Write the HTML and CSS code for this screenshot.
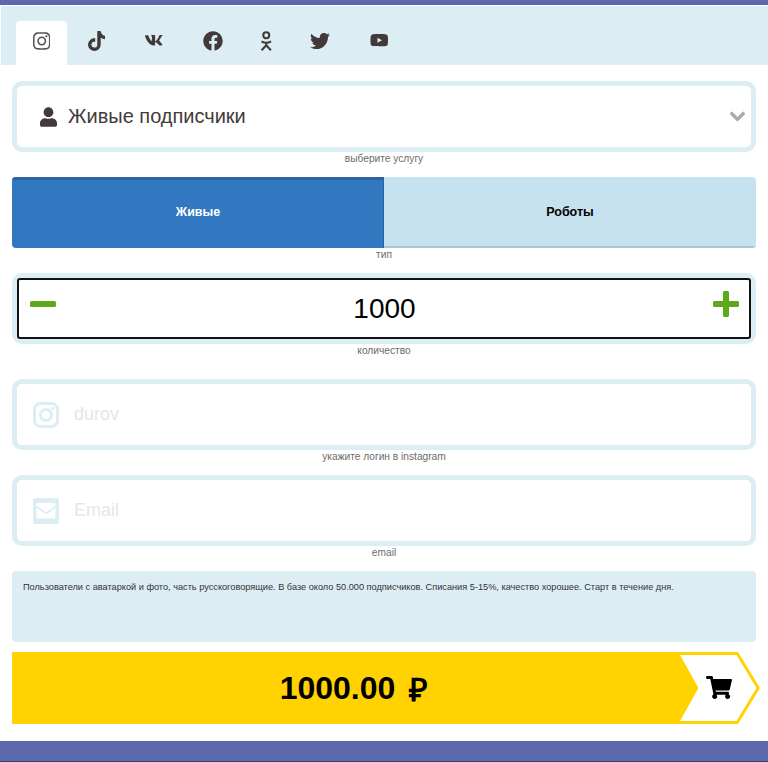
FILE: index.html
```html
<!DOCTYPE html>
<html lang="ru">
<head>
<meta charset="utf-8">
<title>Заказ</title>
<link rel="stylesheet" href="styles.css">
</head>
<body>
<header class="topbar"></header>
<nav class="tabs">
  <a class="tab tab-active"><svg class="ico ico-grey" viewBox="0 0 448 512"><path d="M224.1 141c-63.6 0-114.9 51.3-114.9 114.9s51.3 114.9 114.9 114.9S339 319.5 339 255.9 287.7 141 224.1 141zm0 189.6c-41.1 0-74.7-33.5-74.7-74.7s33.5-74.7 74.7-74.7 74.7 33.5 74.7 74.7-33.6 74.7-74.7 74.7zm146.4-194.3c0 14.9-12 26.8-26.8 26.8-14.9 0-26.8-12-26.8-26.8s12-26.8 26.8-26.8 26.8 12 26.8 26.8zm76.1 27.2c-1.7-35.9-9.9-67.7-36.2-93.9-26.2-26.2-58-34.4-93.9-36.2-37-2.1-147.9-2.1-184.9 0-35.8 1.7-67.6 9.9-93.9 36.1s-34.4 58-36.2 93.9c-2.1 37-2.1 147.9 0 184.9 1.7 35.9 9.9 67.7 36.2 93.9s58 34.4 93.9 36.2c37 2.1 147.9 2.1 184.9 0 35.9-1.7 67.7-9.9 93.9-36.2 26.2-26.2 34.4-58 36.2-93.9 2.1-37 2.1-147.8 0-184.8zM398.8 388c-7.8 19.6-22.9 34.7-42.6 42.6-29.5 11.7-99.5 9-132.1 9s-102.7 2.6-132.1-9c-19.6-7.8-34.7-22.9-42.6-42.6-11.7-29.5-9-99.5-9-132.1s-2.6-102.7 9-132.1c7.8-19.6 22.9-34.7 42.6-42.6 29.5-11.7 99.5-9 132.1-9s102.7-2.6 132.1 9c19.6 7.8 34.7 22.9 42.6 42.6 11.7 29.5 9 99.5 9 132.1s2.7 102.7-9 132.1z"/></svg></a>
  <a class="tab"><svg class="ico" viewBox="0 0 448 512"><path d="M448,209.91a210.06,210.06,0,0,1-122.77-39.25V349.38A162.55,162.55,0,1,1,185,188.31V278.2a74.62,74.62,0,1,0,52.23,71.18V0l88,0a121.18,121.18,0,0,0,1.86,22.17h0A122.18,122.18,0,0,0,381,102.39a121.43,121.43,0,0,0,67,20.14Z"/></svg></a>
  <a class="tab"><svg class="ico ico-wide" viewBox="0 0 576 512"><path d="M545 117.7c3.7-12.5 0-21.7-17.8-21.7h-58.9c-15 0-21.9 7.9-25.6 16.7-5.1 12.5-43.5 103-88.3 153.7-14.5 14.6-21 19.3-28.9 19.3-3.9 0-9.2-4.7-9.2-17.2V117.7c0-15-4.4-21.7-16.8-21.7h-92.6c-9.4 0-15 7-15 13.5 0 14.2 21.2 17.5 23.4 57.6v87.1c0 19.1-3.4 22.6-10.9 22.6-20 0-68.6-73.4-97.4-157.4-5.8-16.3-11.5-22.9-26.6-22.9H21.7C5 96.5 0 104.4 0 113.2c0 15.6 20 93.1 93.1 195.5C141.8 378.7 210.4 416 272.8 416c37.5 0 42.1-8.4 42.1-22.9 0-66.8-3.4-73.1 15.4-73.1 8.7 0 23.7 4.4 58.7 38.1 40 40 46.6 57.9 69 57.9h58.9c16.8 0 25.3-8.4 20.4-25-11.2-34.9-86.9-106.7-90.3-111.5-8.7-11.2-6.2-16.2 0-26.2.1-.1 72-101.3 79.4-135.6z"/></svg></a>
  <a class="tab"><svg class="ico ico-square" viewBox="0 0 512 512"><path d="M504 256C504 119 393 8 256 8S8 119 8 256c0 123.78 90.69 226.38 209.25 245V327.69h-63V256h63v-54.64c0-62.15 37-96.48 93.67-96.48 27.14 0 55.52 4.84 55.52 4.84v61h-31.28c-30.8 0-40.41 19.12-40.41 38.73V256h68.78l-11 71.69h-57.78V501C413.31 482.38 504 379.78 504 256z"/></svg></a>
  <a class="tab"><svg class="ico ico-ok" viewBox="0 0 12.500 20"><circle cx="6.250" cy="4.300" r="3"/><path d="M1.500 10.300c3 1.900 6.500 1.900 9.500 0M6.250 12.300v1.500M1.600 19.200l4.650-5 4.650 5"/></svg></a>
  <a class="tab"><svg class="ico ico-square" viewBox="0 0 512 512"><path d="M459.37 151.716c.325 4.548.325 9.097.325 13.645 0 138.72-105.583 298.558-298.558 298.558-59.452 0-114.68-17.219-161.137-47.106 8.447.974 16.568 1.299 25.34 1.299 49.055 0 94.213-16.568 130.274-44.832-46.132-.975-84.792-31.188-98.112-72.772 6.498.974 12.995 1.624 19.818 1.624 9.421 0 18.843-1.3 27.614-3.573-48.081-9.747-84.143-51.98-84.143-102.985v-1.299c13.969 7.797 30.214 12.67 47.431 13.319-28.264-18.843-46.781-51.005-46.781-87.391 0-19.492 5.197-37.36 14.294-52.954 51.655 63.675 129.3 105.258 216.365 109.807-1.624-7.797-2.599-15.918-2.599-24.04 0-57.828 46.782-104.934 104.934-104.934 30.213 0 57.502 12.67 76.67 33.137 23.715-4.548 46.456-13.32 66.599-25.34-7.798 24.366-24.366 44.833-46.132 57.827 21.117-2.273 41.584-8.122 60.426-16.243-14.292 20.791-32.161 39.308-52.628 54.253z"/></svg></a>
  <a class="tab"><svg class="ico ico-wide" viewBox="0 0 576 512"><path d="M549.655 124.083c-6.281-23.65-24.787-42.276-48.284-48.597C458.781 64 288 64 288 64S117.22 64 74.629 75.486c-23.497 6.322-42.003 24.947-48.284 48.597-11.412 42.867-11.412 132.305-11.412 132.305s0 89.438 11.412 132.305c6.281 23.65 24.787 41.5 48.284 47.821C117.22 448 288 448 288 448s170.78 0 213.371-11.486c23.497-6.321 42.003-24.171 48.284-47.821 11.412-42.867 11.412-132.305 11.412-132.305s0-89.438-11.412-132.305zm-317.51 213.508V175.185l142.739 81.205-142.739 81.201z"/></svg></a>
</nav>
<main class="form">
  <section class="field">
    <div class="box box-select">
      <svg class="ico-user" viewBox="0 0 448 512"><path d="M224 256c70.7 0 128-57.3 128-128S294.7 0 224 0 96 57.3 96 128s57.3 128 128 128zm89.6 32h-16.7c-22.2 10.2-46.9 16-72.9 16s-50.6-5.8-72.9-16h-16.7C60.2 288 0 348.2 0 422.4V464c0 26.5 21.5 48 48 48h352c26.5 0 48-21.5 48-48v-41.6c0-74.2-60.2-134.4-134.4-134.4z"/></svg>
      <span class="select-text">Живые подписчики</span>
      <svg class="ico-chevron" viewBox="0 0 448 512"><path d="M207.029 381.476L12.686 187.132c-9.373-9.373-9.373-24.569 0-33.941l22.667-22.667c9.357-9.357 24.522-9.375 33.901-.04L224 284.505l154.745-154.021c9.379-9.335 24.544-9.317 33.901.04l22.667 22.667c9.373 9.373 9.373 24.569 0 33.941L240.971 381.476c-9.373 9.372-24.569 9.372-33.942 0z"/></svg>
    </div>
    <p class="caption">выберите услугу</p>
  </section>
  <section class="field">
    <div class="toggle">
      <div class="opt opt-on">Живые</div>
      <div class="opt opt-off">Роботы</div>
    </div>
    <p class="caption">тип</p>
  </section>
  <section class="field field-qty">
    <div class="box box-qty">
      <div class="qty-inner">
        <svg class="qty-btn" viewBox="0 0 26 26"><rect x="0" y="10" width="26" height="6" rx="1.500"/></svg>
        <span class="qty-val">1000</span>
        <svg class="qty-btn" viewBox="0 0 26 26"><path d="M10 1.500C10 .7 10.700 0 11.500 0h3c.8 0 1.500.7 1.500 1.500V10h8.500c.8 0 1.500.7 1.500 1.500v3c0 .8-.7 1.500-1.500 1.500H16v8.500c0 .8-.7 1.500-1.500 1.500h-3c-.8 0-1.500-.7-1.500-1.500V16H1.500C.7 16 0 15.300 0 14.500v-3C0 10.700.7 10 1.500 10H10z"/></svg>
      </div>
    </div>
    <p class="caption">количество</p>
  </section>
  <section class="field">
    <div class="box box-input">
      <svg class="ico-input" viewBox="0 0 26 26"><rect x="1.500" y="1.500" width="23" height="23" rx="6" class="ig-line"/><circle cx="13" cy="13" r="5.500" class="ig-line"/><circle cx="19.500" cy="6.500" r="1.500"/></svg>
      <input class="text-input" type="text" placeholder="durov">
    </div>
    <p class="caption">укажите логин в instagram</p>
  </section>
  <section class="field">
    <div class="box box-input">
      <svg class="ico-input" viewBox="0 0 26 26"><rect width="26" height="26" rx="2.500"/><rect class="env-body" x="3.500" y="5" width="19" height="15.500" rx="1.500"/><path class="env-line" d="M3.500 8.500l7.800 5.800q1.700 1.200 3.400 0l7.800-5.800"/></svg>
      <input class="text-input" type="text" placeholder="Email">
    </div>
    <p class="caption">email</p>
  </section>
  <section class="desc">Пользователи с аватаркой и фото, часть русскоговорящие. В базе около 50.000 подписчиков. Списания 5-15%, качество хорошее. Старт в течение дня.</section>
  <section class="buy">
    <div class="price">1000.00<span class="rub">₽</span></div>
    <div class="buy-arrow">
      <svg class="arrow-shape" viewBox="0 0 80 72"><path class="arrow-fill" d="M0 0H58L80 36 58 72H0Z"/><path class="arrow-white" d="M0 3H56.500L76.500 36 56.500 69H0L18.500 36Z"/></svg>
      <svg class="ico-cart" viewBox="0 0 576 512"><path d="M528.12 301.319l47.273-208C578.806 78.301 567.391 64 551.99 64H159.208l-9.166-44.81C147.758 8.021 137.93 0 126.529 0H24C10.745 0 0 10.745 0 24v16c0 13.255 10.745 24 24 24h69.883l70.248 343.435C147.325 417.1 136 435.222 136 456c0 30.928 25.072 56 56 56s56-25.072 56-56c0-15.674-6.447-29.835-16.824-40h209.647C430.447 426.165 424 440.326 424 456c0 30.928 25.072 56 56 56s56-25.072 56-56c0-22.172-12.888-41.332-31.579-50.405l5.517-24.276c3.413-15.018-8.002-29.319-23.403-29.319H218.117l-6.545-32h293.145c11.206 0 20.92-7.754 23.403-18.681z"/></svg>
    </div>
  </section>
</main>
<footer class="bottombar"></footer>
</body>
</html>
```
FILE: styles.css
```css
* { box-sizing: border-box; }
html, body { margin: 0; padding: 0; }
body {
  width: 768px;
  height: 762px;
  overflow: hidden;
  background: #fff;
  font-family: "Liberation Sans", Arial, sans-serif;
  color: #423a38;
}
.topbar { height: 5px; background: #5c69ad; }
.tabs {
  display: flex;
  gap: 4px;
  height: 59px;
  margin: 1px 0 0 1px;
  padding: 15px 0 0 15px;
  background: #dcedf4;
}
.tab {
  height: 44px;
  display: flex;
  align-items: center;
  justify-content: center;
  padding: 0 16.750px 4px;
  border-radius: 4px 4px 0 0;
}
.tab-active { background: #fff; }
.ico { height: 20px; width: 17.500px; fill: #423a38; }
.ico-wide { width: 18.500px; height: 16.500px; margin: 0 2px 1px; }
.ico-square { width: 20px; }
.ico-grey { fill: #555; }
.ico-ok { width: 12.500px; fill: none; stroke: #423a38; stroke-width: 2.100; }
.form { padding: 16px 12px 0; }
.field { margin-bottom: 12px; }
.field-qty { margin-bottom: 22px; }
.box {
  height: 71px;
  border: 5px solid #dcedf4;
  border-radius: 10px;
  background: #fff;
  display: flex;
  align-items: center;
}
.box-select { padding: 0 6px 0 23px; }
.ico-user { width: 17px; height: 20px; fill: #423a38; margin-right: 11px; }
.select-text { flex: 1; font-size: 20px; color: #423a38; }
.ico-chevron { width: 15px; height: 17px; fill: #aaa; stroke: #aaa; stroke-width: 30; }
.caption {
  margin: 1px 0 0;
  height: 12px;
  text-align: center;
  font-size: 10.200px;
  line-height: 12px;
  color: #6b6b6b;
}
.toggle {
  display: flex;
  height: 71px;
  border-radius: 4px;
  overflow: hidden;
}
.opt {
  flex: 1;
  display: flex;
  align-items: center;
  justify-content: center;
  padding-bottom: 1px;
  font-size: 12.500px;
  font-weight: 700;
}
.opt-on {
  background: #3178c0;
  color: #fff;
  box-shadow: inset 0 3px 0 #2b629f, inset -1px 0 0 #2b629f;
}
.opt-off {
  background: #c6e2ee;
  color: #000;
  box-shadow: inset 0 -2px 0 #a9c5d3;
}
.qty-inner {
  flex: 1;
  height: 61px;
  border: 2px solid #111;
  border-radius: 3px;
  display: flex;
  align-items: center;
  justify-content: space-between;
  padding: 0 10px 9px 11px;
}
.qty-btn { width: 26px; height: 26px; fill: #5fa81d; }
.qty-val { font-size: 28px; color: #000; padding-top: 9px; }
.box-input { padding: 0 16px; }
.ico-input { width: 26px; height: 26px; fill: #dcedf4; flex: none; margin-right: 15px; }
.ig-line { fill: none; stroke: #dcedf4; stroke-width: 3; }
.env-body { fill: #fff; }
.env-line { fill: none; stroke: #dcedf4; stroke-width: 1.800; }
.text-input {
  flex: 1;
  min-width: 0;
  border: 0;
  outline: 0;
  padding: 0;
  background: transparent;
  font: 18px "Liberation Sans", Arial, sans-serif;
  color: #423a38;
}
.text-input::placeholder { color: #e6e6e6; opacity: 1; }
.desc {
  height: 71px;
  padding: 11px 11px;
  border-radius: 4px;
  background: #dcedf4;
  font-size: 9.200px;
  line-height: 11px;
  color: #333;
}
.buy {
  display: flex;
  height: 72px;
  margin: 10px -4px 0 0;
}
.price {
  flex: 1;
  display: flex;
  align-items: center;
  justify-content: center;
  padding-left: 16px;
  background: #ffd200;
  font-size: 32px;
  font-weight: 700;
  color: #000;
}
.rub { margin-left: 14px; }
.buy-arrow {
  position: relative;
  width: 80px;
  height: 72px;
}
.arrow-shape { display: block; width: 80px; height: 72px; }
.arrow-fill { fill: #ffd200; }
.arrow-white { fill: #fff; }
.ico-cart {
  position: absolute;
  left: 26px;
  top: 24px;
  width: 26px;
  height: 23px;
  fill: #000;
}
.bottombar {
  height: 21px;
  margin-top: 17px;
  background: #5c69ad;
  border-bottom: 1px solid #3a4270;
}
```
